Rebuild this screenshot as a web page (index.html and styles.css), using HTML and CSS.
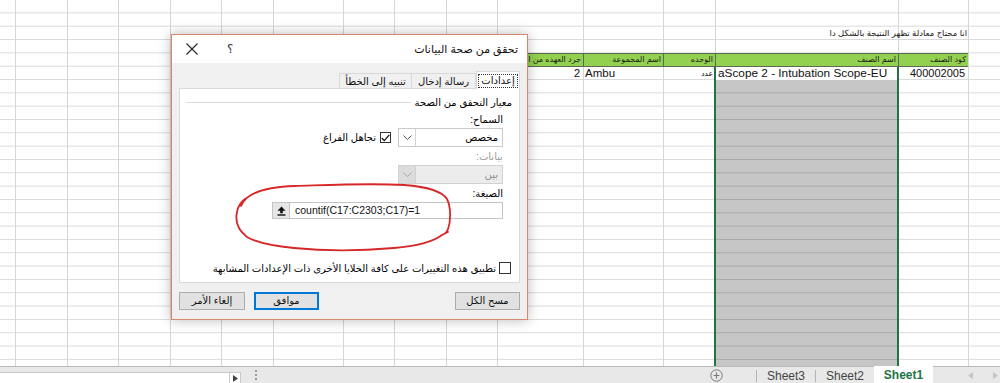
FILE: index.html
```html
<!DOCTYPE html>
<html lang="ar">
<head>
<meta charset="utf-8">
<title>Data Validation</title>
<link rel="stylesheet" href="styles.css">
</head>
<body>
<div class="app">
  <div class="sheet">
    <div class="vlines">
      <div></div><div></div><div></div><div></div><div></div><div></div><div></div><div></div>
      <div></div><div></div><div></div><div></div><div></div><div></div><div></div><div></div>
    </div>
    <div class="cells">
      <div class="note">انا محتاج معادلة تظهر النتيجة بالشكل دا</div>
      <div class="hd c11">جرد العهده من المخزن</div>
      <div class="hd c12">اسم المجموعة</div>
      <div class="hd c13">الوحده</div>
      <div class="hd c14">اسم الصنف</div>
      <div class="hd c15">كود الصنف</div>
      <div class="cell num c11">2</div>
      <div class="cell txt c12">Ambu</div>
      <div class="cell unit c13">عدد</div>
      <div class="sel">
        <div class="active">aScope 2 - Intubation Scope-EU</div>
        <div class="fill"></div>
      </div>
      <div class="cell num c15">400002005</div>
    </div>
  </div>

  <div class="tabbar">
    <div class="hscroll"></div>
    <div class="hs-btn"><svg width="5" height="7" viewBox="0 0 5 7"><path d="M0 0 L5 3.5 L0 7 Z" fill="#444"/></svg></div>
    <div class="vdots"><span></span><span></span><span></span></div>
    <div class="plus"><svg width="13" height="13" viewBox="0 0 13 13"><circle cx="6.5" cy="6.5" r="5.7" fill="none" stroke="#7a7a7a" stroke-width="1"/><path d="M6.5 3.5 V9.5 M3.5 6.5 H9.5" stroke="#7a7a7a" stroke-width="1.2"/></svg></div>
    <div class="tsep"></div>
    <div class="stab">Sheet3</div>
    <div class="tsep"></div>
    <div class="stab">Sheet2</div>
    <div class="stab on">Sheet1</div>
    <div class="navs">
      <svg width="5" height="7" viewBox="0 0 5 7"><path d="M5 0 L0 3.5 L5 7 Z" fill="#c4c4c4"/></svg>
      <svg width="5" height="7" viewBox="0 0 5 7"><path d="M0 0 L5 3.5 L0 7 Z" fill="#c4c4c4"/></svg>
    </div>
  </div>

  <div class="dialog">
    <div class="dlg-title">
      <span class="ttl">تحقق من صحة البيانات</span>
      <span class="grow"></span>
      <span class="help">؟</span>
      <span class="close"><svg width="12" height="12" viewBox="0 0 12 12"><path d="M0.5 0.5 L11.5 11.5 M11.5 0.5 L0.5 11.5" stroke="#222" stroke-width="1.1"/></svg></span>
    </div>
    <div class="dlg-body">
      <div class="tabs">
        <div class="tab on"><span class="focus">إعدادات</span></div>
        <div class="tab t2">رسالة إدخال</div>
        <div class="tab t3">تنبيه إلى الخطأ</div>
      </div>
      <div class="panel">
        <div class="group"><span>معيار التحقق من الصحة</span><span class="gline"></span></div>
        <div class="lbl ind l1">السماح:</div>
        <div class="row ind r1">
          <div class="select">
            <span class="sv">مخصص</span>
            <span class="sa"><svg width="9" height="5" viewBox="0 0 9 5"><path d="M0.5 0.5 L4.5 4.5 L8.5 0.5" fill="none" stroke="#555" stroke-width="1"/></svg></span>
          </div>
          <span class="cb checked"><svg width="9" height="8" viewBox="0 0 9 8"><path d="M0.8 4 L3.3 6.6 L8.3 0.8" fill="none" stroke="#111" stroke-width="1.3"/></svg></span>
          <span class="cbl">تجاهل الفراغ</span>
        </div>
        <div class="lbl ind dis l2">بيانات:</div>
        <div class="row ind r2">
          <div class="select off">
            <span class="sv">بين</span>
            <span class="sa"><svg width="9" height="5" viewBox="0 0 9 5"><path d="M0.5 0.5 L4.5 4.5 L8.5 0.5" fill="none" stroke="#a8a8a8" stroke-width="1"/></svg></span>
          </div>
        </div>
        <div class="lbl ind l3">الصيغة:</div>
        <div class="row ind r3">
          <div class="formula">
            <span class="fbtn"><svg width="9" height="10" viewBox="0 0 9 10"><path d="M4.5 0.5 L8.5 4.8 H5.8 V7.2 H3.2 V4.8 H0.5 Z" fill="#111"/><rect x="0.5" y="8.3" width="8" height="1.4" fill="#111"/></svg></span>
            <span class="ftext">countif(C17:C2303;C17)=1</span>
          </div>
        </div>
        <div class="row apply">
          <span class="cb"></span>
          <span class="cbl">تطبيق هذه التغييرات على كافة الخلايا الأخرى ذات الإعدادات المشابهة</span>
        </div>
      </div>
      <div class="buttons">
        <button class="btn">مسح الكل</button>
        <span class="grow"></span>
        <button class="btn def">موافق</button>
        <button class="btn cancel">إلغاء الأمر</button>
      </div>
    </div>
  </div>

  <svg class="scribble" width="226" height="80" viewBox="0 0 226 80">
    <path d="M12 29 C17 15 38 10 66 9 C100 8 140 6 175 8 C200 10 213 14 218 22 C222 30 222 44 219 52 C218 55 216 57 213 58 L219 55 M213 58 C205 64 190 69 165 71 C130 74 95 74 65 71 C45 69 28 66 18 60 C9 53 6 44 8 35 C9 29 12 25 16 22" fill="none" stroke="#d62828" stroke-width="1.8" stroke-linecap="round" stroke-linejoin="round"/>
  </svg>
</div>
</body>
</html>
```

FILE: styles.css
```css
* { box-sizing: border-box; margin: 0; padding: 0; }
html, body { width: 1000px; height: 383px; overflow: hidden; background: #fff; }
body { font-family: "Liberation Sans", "DejaVu Sans", sans-serif; color: #000; }

.app { position: relative; width: 1000px; height: 383px; display: flex; flex-direction: column; }

/* ---------- sheet ---------- */
.sheet {
  height: 366px; overflow: hidden; display: grid;
  background-image: linear-gradient(to bottom, transparent 12.333px, #dadada 12.333px);
  background-size: 100% 13.333px;
}
.vlines, .cells {
  grid-area: 1 / 1; display: grid;
  grid-template-columns: 15px 52px 51px 52px 51px 52px 70px 51px 52px 51px 86px 80px 52px 183px 70px 32px;
}
.vlines { grid-template-rows: 366px; }
.vlines div { border-left: 1px solid #d6d6d6; }
.vlines div:first-child { border-left: 0; }
.cells { grid-template-rows: repeat(28, 13.333px); }

.c11 { grid-column: 11; }
.c12 { grid-column: 12; }
.c13 { grid-column: 13; }
.c14 { grid-column: 14; }
.c15 { grid-column: 15; }

.note {
  grid-row: 3; grid-column: 15; min-width: 0; direction: rtl; white-space: nowrap;
  font-size: 8.5px; line-height: 13px; padding-right: 1px; color: #222;
}
.hd {
  grid-row: 5; min-width: 0; overflow: hidden; white-space: nowrap; direction: rtl;
  background: #92d050; border-top: 1px solid #5d6b55; border-bottom: 1px solid #5d6b55;
  border-left: 1px solid #5d6b55; font-size: 8px; line-height: 11px; padding-right: 2px; color: #1a1a1a;
}
.cell { grid-row: 6; min-width: 0; white-space: nowrap; font-size: 11px; line-height: 13px; color: #111; }
.num { text-align: right; padding-right: 3px; }
.txt { padding-left: 2px; font-size: 11.5px; }
.unit { direction: rtl; font-size: 7.5px; padding-right: 2px; }

.sel {
  grid-column: 14; grid-row: 6 / 29; margin: 0 -1px;
  border-left: 2px solid #217346; border-right: 2px solid #217346;
  display: flex; flex-direction: column;
}
.active { height: 13.333px; flex: none; background: #fff; font-size: 11.8px; line-height: 13px; padding-left: 2px; white-space: nowrap; color: #111; }
.fill {
  flex: 1; background-color: #c6c6c6;
  background-image: linear-gradient(to bottom, transparent 12.333px, #a8a8a8 12.333px);
  background-size: 100% 13.333px;
}

/* ---------- tab bar ---------- */
.tabbar {
  height: 17px; flex: none; display: flex; align-items: stretch;
  background: #e8e8e8; border-top: 1px solid #b9b9b9;
}
.hscroll { width: 229px; flex: none; margin-top: 5px; background: #fff; border-top: 1px solid #c8c8c8; }
.hs-btn {
  width: 12px; flex: none; margin-top: 5px; background: #fff; border: 1px solid #c8c8c8; border-bottom: 0;
  display: flex; align-items: center; justify-content: center;
}
.vdots { margin-left: 14px; display: flex; flex-direction: column; justify-content: center; gap: 2px; }
.vdots span { width: 2px; height: 2px; background: #9a9a9a; }
.plus { margin-left: auto; margin-right: 33px; display: flex; align-items: center; }
.tsep { width: 1px; flex: none; margin: 3px 0 1px; background: #b5b5b5; }
.stab {
  width: 58px; flex: none; display: flex; align-items: center; justify-content: center;
  font-size: 12px; color: #444; padding-top: 1px;
}
.stab.on {
  width: 59px; background: #fff; color: #217346; font-weight: bold; margin-top: -1px;
}
.navs { width: 67px; flex: none; display: flex; align-items: center; gap: 20px; padding-left: 35px; }

/* ---------- dialog ---------- */
.dialog {
  position: absolute; left: 171px; top: 34px; width: 357px; height: 286px;
  border: 1px solid #d8876f; background: #f0f0f0;
  box-shadow: 0 0 12px rgba(0, 0, 0, 0.28);
  direction: rtl; display: flex; flex-direction: column; font-size: 10px;
}
.dlg-title { height: 28px; flex: none; background: #fff; display: flex; align-items: center; padding: 0 9px 0 14px; }
.ttl { font-size: 11px; color: #111; }
.grow { flex: 1; }
.help { font-size: 12px; color: #333; margin-left: 29px; }
.close { display: flex; }

.dlg-body { flex: 1; padding: 8px 7px 0 7px; display: flex; flex-direction: column; }
.tabs { display: flex; height: 17px; align-items: flex-end; position: relative; z-index: 1; flex: none; }
.tab {
  height: 15px; border: 1px solid #d9d9d9; border-bottom: 0; background: #f0f0f0;
  display: flex; align-items: center; justify-content: center; font-size: 10px; color: #111;
  margin-left: -1px;
}
.tab.on { width: 44px; height: 18px; margin-bottom: -1px; background: #fff; margin-left: 0; }
.tab.t2 { width: 65px; }
.tab.t3 { width: 73px; }
.focus { outline: 1px dotted #333; outline-offset: 0; padding: 0 2px; line-height: 12px; }

.panel {
  height: 195px; flex: none; background: #fff; border: 1px solid #d9d9d9;
  padding: 7px 7px 0 6px; display: flex; flex-direction: column;
}
.group { display: flex; align-items: center; height: 13px; font-size: 10px; }
.gline { flex: 1; border-top: 1px solid #dcdcdc; margin-right: 4px; }
.ind { margin-right: 9px; }
.lbl { height: 12px; line-height: 12px; font-size: 10px; }
.dis { color: #9a9a9a; }
.l1 { margin-top: 5px; }
.l2, .l3 { margin-top: 4px; }
.row { display: flex; align-items: center; }
.r1, .r2 { margin-top: 2px; height: 19px; }
.r3 { margin-top: 2px; height: 17px; }

.select {
  width: 105px; height: 19px; border: 1px solid #c9c9c9; background: #fff; display: flex;
}
.sv { flex: 1; padding-right: 4px; font-size: 10px; line-height: 17px; }
.sa { width: 17px; border-right: 1px solid #d4d4d4; display: flex; align-items: center; justify-content: center; }
.select.off { background: #ececec; border-color: #d2d2d2; }
.select.off .sv { color: #8a8a8a; }
.select.off .sa { background: #dcdcdc; border-right-color: #d0d0d0; }

.cb {
  width: 11px; height: 11px; border: 1px solid #333; background: #fff;
  display: flex; align-items: center; justify-content: center; flex: none;
}
.r1 .cb { margin-right: 7px; }
.cbl { margin-right: 4px; font-size: 10px; white-space: nowrap; }

.formula {
  width: 231px; height: 17px; border: 1px solid #c4c4c4; background: #fff;
  direction: ltr; display: flex;
}
.fbtn {
  width: 17px; background: #e6e6e6; border-right: 1px solid #c4c4c4;
  display: flex; align-items: center; justify-content: center;
}
.ftext { padding-left: 5px; font-size: 10.5px; line-height: 15px; color: #111; }

.apply { margin-top: auto; margin-bottom: 8px; height: 12px; margin-right: 1px; }
.apply .cb { width: 12px; height: 12px; }
.apply .cbl { margin-right: 3px; }

.buttons { display: flex; margin-top: 9px; height: 18px; padding-left: 0; }
.btn {
  width: 65px; height: 18px; border: 1px solid #adadad; background: #e1e1e1;
  font-family: inherit; font-size: 10px; color: #111; line-height: 16px;
}
.btn.def { border-color: #0078d7; box-shadow: inset 0 0 0 1px #0078d7; }
.btn.cancel { width: 66px; margin-right: 9px; }

.scribble { position: absolute; left: 229px; top: 177px; }
```
